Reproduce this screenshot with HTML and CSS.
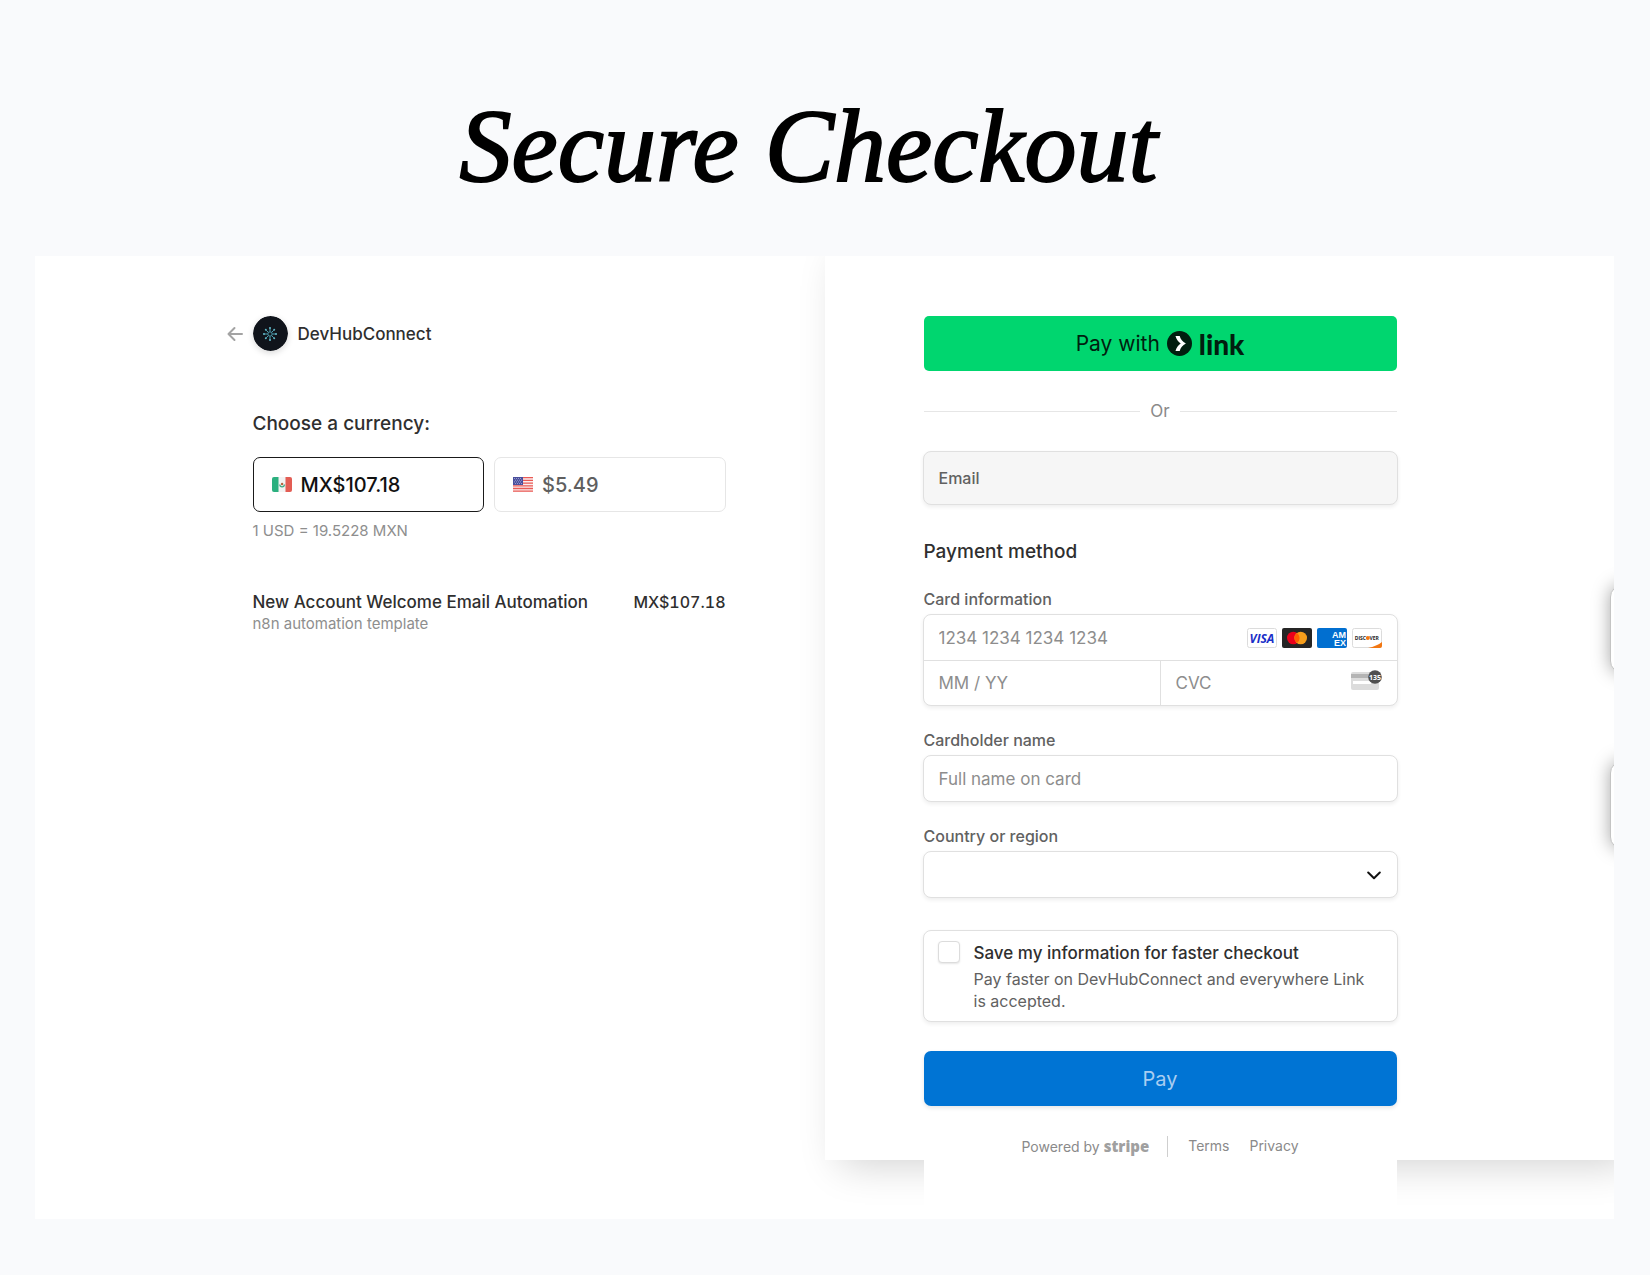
FILE: index.html
```html
<!DOCTYPE html>
<html lang="en">

<head>
    <meta charset="utf-8">
    <title>Secure Checkout</title>
    <link rel="stylesheet" href="styles.css">
</head>

<body>

    <h1 class="page-title">Secure Checkout</h1>

    <main class="checkout">

        <!-- Order summary -->
        <section class="summary">
            <div class="summary-inner">
                <a href="#" class="brand">
                    <svg class="back-arrow" width="16" height="16" viewBox="0 0 16 16" fill="none" stroke="#a3a3a3" stroke-width="2" stroke-linecap="round" stroke-linejoin="round">
                        <path d="M15 8H1.500M7.500 2L1.500 8l6 6" />
                    </svg>
                    <svg class="brand-logo" width="35" height="35" viewBox="0 0 35 35">
                        <circle cx="17.500" cy="17.500" r="17.500" fill="#10141b" />
                        <g fill="none" stroke="#4f9fb0" stroke-width="1">
                            <circle cx="17" cy="18" r="2.200" />
                            <path d="M17 15.500V12.500M17 20.500v3M14.500 18h-3M19.500 18h3M15.200 16.200l-2-2M18.800 16.200l2-2M15.200 19.800l-2 2M18.800 19.800l2 2" />
                        </g>
                        <g fill="#5fb4c4">
                            <circle cx="17" cy="12" r="1.100" />
                            <circle cx="17" cy="24" r="1.100" />
                            <circle cx="11" cy="18" r="1.100" />
                            <circle cx="23" cy="18" r="1.100" />
                            <circle cx="12.800" cy="13.800" r="1" />
                            <circle cx="21.200" cy="13.800" r="1" />
                            <circle cx="12.800" cy="22.200" r="1" />
                            <circle cx="21.200" cy="22.200" r="1" />
                        </g>
                    </svg>
                    <span class="brand-name">DevHubConnect</span>
                </a>

                <h2 class="heading currency-heading">Choose a currency:</h2>
                <div class="currencies">
                    <button type="button" class="currency selected">
                        <svg width="20" height="15" viewBox="0 0 20 15">
                            <rect width="20" height="15" rx="2" fill="#f3f3f3" />
                            <path d="M2 0h4.500v15H2a2 2 0 0 1-2-2V2a2 2 0 0 1 2-2z" fill="#2bb07f" />
                            <path d="M13.500 0H18a2 2 0 0 1 2 2v11a2 2 0 0 1-2 2h-4.500z" fill="#e35d54" />
                            <path d="M7.800 7.500a2.300 2.300 0 0 0 4.600 0" fill="none" stroke="#3fa884" stroke-width="1.200" />
                            <circle cx="10.100" cy="7" r="1.200" fill="#b5633f" />
                        </svg>
                        MX$107.18
                    </button>
                    <button type="button" class="currency">
                        <svg width="20" height="15" viewBox="0 0 20 15">
                            <rect width="20" height="15" rx="1" fill="#fbeeee" />
                            <path d="M0 .7h20M0 3.400h20M0 6.100h20M0 8.800h20M0 11.500h20M0 14.200h20" stroke="#ea5a54" stroke-width="1.300" />
                            <rect width="10" height="8" fill="#4a4f9c" />
                            <path d="M1 1.500h8M2 3.200h7M1 4.900h8M2 6.600h7" stroke="#aeb2dc" stroke-width=".8" stroke-dasharray="1 1" />
                        </svg>
                        $5.49
                    </button>
                </div>
                <p class="small rate">1 USD = 19.5228 MXN</p>

                <div class="item">
                    <span>New Account Welcome Email Automation</span>
                    <span class="price">MX$107.18</span>
                </div>
                <p class="small">n8n automation template</p>
            </div>
        </section>

        <!-- Payment form -->
        <section class="payment">
            <form class="payment-form">
                <button type="button" class="link-button">
                    Pay with
                    <svg width="25" height="25" viewBox="0 0 25 25">
                        <circle cx="12.500" cy="12.500" r="12.500" fill="#011e0f" />
                        <path d="M8.500 5h4.200c.7 3 2.900 5.600 6.200 7.500-3.300 1.900-5.500 4.500-6.200 7.500H8.500c.8-3.200 2.600-5.700 5.200-7.500C11.100 10.700 9.300 8.200 8.500 5z" fill="#fff" />
                    </svg>
                    <span class="link-word">link</span>
                </button>

                <div class="divider">Or</div>

                <div class="box email-box">
                    <label for="email">Email</label>
                    <input type="email" id="email">
                </div>

                <h2 class="heading payment-heading">Payment method</h2>

                <label class="field-label" for="card">Card information</label>
                <div class="box card-box">
                    <div class="card-row">
                        <input type="text" id="card" placeholder="1234 1234 1234 1234">
                        <div class="card-brands">
                            <svg width="30" height="20" viewBox="0 0 30 20">
                                <rect x=".5" y=".5" width="29" height="19" rx="2" fill="#fff" stroke="#dcdcdc" />
                                <text x="15" y="14.500" text-anchor="middle" class="visa">VISA</text>
                            </svg>
                            <svg width="30" height="20" viewBox="0 0 30 20">
                                <rect width="30" height="20" rx="2" fill="#252525" />
                                <circle cx="11.300" cy="10" r="6.300" fill="#eb001b" />
                                <circle cx="18.700" cy="10" r="6.300" fill="#f79e1b" />
                                <path d="M15 4.900a6.300 6.300 0 0 1 0 10.200 6.300 6.300 0 0 1 0-10.200z" fill="#ff5f00" />
                            </svg>
                            <svg width="30" height="20" viewBox="0 0 30 20">
                                <rect width="30" height="20" rx="2" fill="#016fd0" />
                                <text x="15" y="10" class="amex">AM</text>
                                <text x="17" y="17.500" class="amex">EX</text>
                            </svg>
                            <svg width="30" height="20" viewBox="0 0 30 20">
                                <rect x=".5" y=".5" width="29" height="19" rx="2" fill="#fff" stroke="#dcdcdc" />
                                <path d="M30 14v4a2 2 0 0 1-2 2H16c6-1.200 10.500-3.200 14-6z" fill="#f27712" />
                                <text x="14" y="12" text-anchor="end" class="discover">DISC</text>
                                <circle cx="15.800" cy="10" r="2" fill="#f27712" />
                                <text x="17.500" y="12" class="discover">VER</text>
                            </svg>
                        </div>
                    </div>
                    <div class="card-row card-row-split">
                        <div class="card-cell">
                            <input type="text" placeholder="MM / YY" aria-label="Expiration">
                        </div>
                        <div class="card-cell">
                            <input type="text" placeholder="CVC" aria-label="CVC">
                            <svg width="31" height="26" viewBox="0 0 31 26">
                                <rect y="2" width="28" height="18" rx="2" fill="#dcdcdc" />
                                <rect y="4" width="28" height="4" fill="#b4b4b4" />
                                <rect x="2" y="11" width="18" height="3" fill="#fff" />
                                <circle cx="24" cy="7" r="6.800" fill="#4f4f4f" />
                                <text x="24" y="9.500" text-anchor="middle" class="cvc-digits">135</text>
                            </svg>
                        </div>
                    </div>
                </div>

                <label class="field-label" for="name">Cardholder name</label>
                <input type="text" id="name" class="box single" placeholder="Full name on card">

                <label class="field-label" for="country">Country or region</label>
                <div class="select-wrap">
                    <select id="country" class="box single">
                        <option></option>
                    </select>
                    <svg class="chevron" width="14" height="9" viewBox="0 0 14 9" fill="none" stroke="#111" stroke-width="2" stroke-linecap="round" stroke-linejoin="round">
                        <path d="M1.200 1.500L7 7.200l5.800-5.700" />
                    </svg>
                </div>

                <div class="box save-box">
                    <input type="checkbox" id="save">
                    <div class="save-text">
                        <label for="save">Save my information for faster checkout</label>
                        <p>Pay faster on DevHubConnect and everywhere Link is accepted.</p>
                    </div>
                </div>

                <button type="submit" class="pay-button">Pay</button>

                <div class="legal">
                    <a href="#" class="powered">Powered by <b>stripe</b></a>
                    <a href="#">Terms</a>
                    <a href="#">Privacy</a>
                </div>
            </form>
        </section>

        <div class="drawer drawer-top"></div>
        <div class="drawer drawer-bottom"></div>

    </main>

</body>

</html>
```

FILE: styles.css
```css
* {
    box-sizing: border-box;
}

body {
    margin: 0;
    padding: 76px 36px 56px 35px;
    background: #f9fafc;
    font-family: Inter, "Liberation Sans", sans-serif;
    color: #2f2f2f;
}

h2,
p {
    margin: 0;
}

a {
    color: inherit;
    text-decoration: none;
}

input,
button,
select {
    font-family: inherit;
}

.page-title {
    margin: 0 32px 40px 0;
    text-align: center;
    font-family: "Liberation Serif", serif;
    font-size: 104px;
    line-height: 140px;
    font-style: italic;
    font-weight: normal;
    color: #000;
    -webkit-text-stroke: 2px #000;
}

.checkout {
    position: relative;
    display: grid;
    grid-template-columns: 1fr 1fr;
    background: #fff;
    overflow: hidden;
}

/* Order summary */

.summary {
    display: flex;
    justify-content: flex-end;
    padding: 60px 99px 0 0;
}

.summary-inner {
    width: 100%;
    max-width: 473px;
}

.brand {
    display: flex;
    align-items: center;
    gap: 10px;
    margin-left: -26px;
    font-size: 17px;
    font-weight: 500;
}

.brand-logo {
    border-radius: 50%;
    box-shadow: 0 2px 6px rgba(0, 0, 0, 0.15);
}

.heading {
    font-size: 19px;
    line-height: 24px;
    font-weight: 500;
}

.currency-heading {
    margin: 61px 0 21px;
}

.currencies {
    display: flex;
    gap: 10px;
}

.currency {
    flex: 1;
    display: flex;
    align-items: center;
    gap: 9px;
    height: 55px;
    padding: 0 18px;
    border: 1px solid #e6e6e6;
    border-radius: 7px;
    background: #fff;
    font-size: 20px;
    font-weight: 500;
    color: #5f5f5f;
}

.currency.selected {
    border-color: #1a1a1a;
    color: #111;
}

.small {
    font-size: 15px;
    line-height: 20px;
    color: #8e8e8e;
}

.rate {
    margin: 9px 0 49px;
}

.item {
    display: flex;
    justify-content: space-between;
    font-size: 17px;
    line-height: 24px;
    font-weight: 500;
}

.price {
    font-size: 16px;
    font-variant-numeric: tabular-nums;
}

/* Payment form */

.payment {
    margin-bottom: 59px;
    padding: 60px 100px 0 99px;
    background: #fff;
    box-shadow: 15px 5px 38px rgba(0, 0, 0, 0.18);
}

.payment-form {
    max-width: 473px;
    margin-bottom: -59px;
    padding-bottom: 62px;
    background: #fff;
}

.link-button {
    display: flex;
    align-items: center;
    justify-content: center;
    gap: 7px;
    width: 100%;
    height: 55px;
    border: none;
    border-radius: 5px;
    background: #00d66f;
    font-size: 21px;
    color: #011e0f;
}

.link-word {
    font-family: Lato, sans-serif;
    font-size: 28px;
    line-height: 28px;
    font-weight: 900;
}

.divider {
    display: flex;
    align-items: center;
    gap: 10px;
    margin: 30px 0;
    font-size: 17px;
    line-height: 20px;
    color: #8a8a8a;
}

.divider::before,
.divider::after {
    content: "";
    flex: 1;
    height: 1px;
    background: #e6e6e6;
}

.box {
    margin: 0 -1px;
    border: 1px solid #e0e0e0;
    border-radius: 8px;
    background: #fff;
    box-shadow: 0 2px 4px rgba(0, 0, 0, 0.07);
}

.box input[type="text"],
.box input[type="email"] {
    flex: 1;
    min-width: 0;
    padding: 0;
    border: none;
    outline: none;
    background: none;
    font-size: 17px;
}

::placeholder {
    color: #8d8d8d;
}

.email-box {
    display: flex;
    align-items: center;
    gap: 15px;
    height: 54px;
    padding: 0 15px;
    background: #f6f6f6;
    font-size: 16px;
    font-weight: 500;
    color: #616161;
}

.payment-heading {
    margin: 35px 0 25px;
}

.field-label {
    display: block;
    margin-bottom: 5px;
    font-size: 16px;
    line-height: 20px;
    font-weight: 500;
    color: #616161;
}

.card-box {
    margin-bottom: 24px;
}

.card-row {
    display: flex;
    align-items: center;
    height: 45px;
    padding: 0 15px;
}

.card-row-split {
    padding: 0;
    border-top: 1px solid #e0e0e0;
}

.card-cell {
    flex: 1;
    display: flex;
    align-items: center;
    align-self: stretch;
    min-width: 0;
    padding: 0 15px;
}

.card-cell + .card-cell {
    border-left: 1px solid #e0e0e0;
}

.card-brands {
    display: flex;
    gap: 5px;
}

.visa {
    font: italic bold 12px "Open Sans", sans-serif;
    fill: #1a2fc8;
}

.amex {
    font: bold 9px "Liberation Sans", sans-serif;
    fill: #fff;
}

.discover {
    font: bold 5px "Open Sans", sans-serif;
    fill: #222;
}

.cvc-digits {
    font: bold 7px "Open Sans", sans-serif;
    fill: #fff;
}

.single {
    width: calc(100% + 2px);
    height: 47px;
    margin-bottom: 24px;
    padding: 0 15px;
    font-size: 17px;
}

.select-wrap {
    position: relative;
    height: 47px;
    margin-bottom: 32px;
}

.select-wrap select {
    appearance: none;
}

.chevron {
    position: absolute;
    top: 20px;
    right: 16px;
    pointer-events: none;
}

.save-box {
    display: flex;
    gap: 14px;
    padding: 10px 14px 9px;
}

.save-box input {
    appearance: none;
    flex: none;
    width: 22px;
    height: 22px;
    margin: 0;
    border: 1px solid #dcdcdc;
    border-radius: 4px;
    background: #fff;
    box-shadow: 0 1px 2px rgba(0, 0, 0, 0.1);
}

.save-text {
    padding-right: 16px;
}

.save-text label {
    display: block;
    margin-bottom: 3px;
    font-size: 17px;
    line-height: 24px;
    font-weight: 500;
}

.save-text p {
    font-size: 16px;
    line-height: 22px;
    color: #616161;
}

.pay-button {
    display: block;
    width: 100%;
    height: 55px;
    margin: 29px 0 30px;
    border: none;
    border-radius: 7px;
    background: #0074d4;
    box-shadow: 0 2px 4px rgba(0, 0, 0, 0.1);
    font-size: 20px;
    color: #a9cdf1;
}

.legal {
    display: flex;
    justify-content: center;
    gap: 20px;
    font-size: 14px;
    line-height: 20px;
    color: #8a8a8a;
}

.powered {
    padding-right: 18px;
    border-right: 1px solid #cfcfcf;
}

.powered b {
    font-family: "Open Sans", sans-serif;
    font-size: 15px;
    font-weight: 800;
    color: #a0a0a0;
}

/* Drawers */

.drawer {
    position: absolute;
    left: calc(100% - 4px);
    width: 60px;
    height: 88px;
    border: 1px solid #c4c4c4;
    border-radius: 12px;
    background: #fff;
    box-shadow: 0 0 18px rgba(0, 0, 0, 0.35);
}

.drawer-top {
    top: 329px;
}

.drawer-bottom {
    top: 505px;
}
```
